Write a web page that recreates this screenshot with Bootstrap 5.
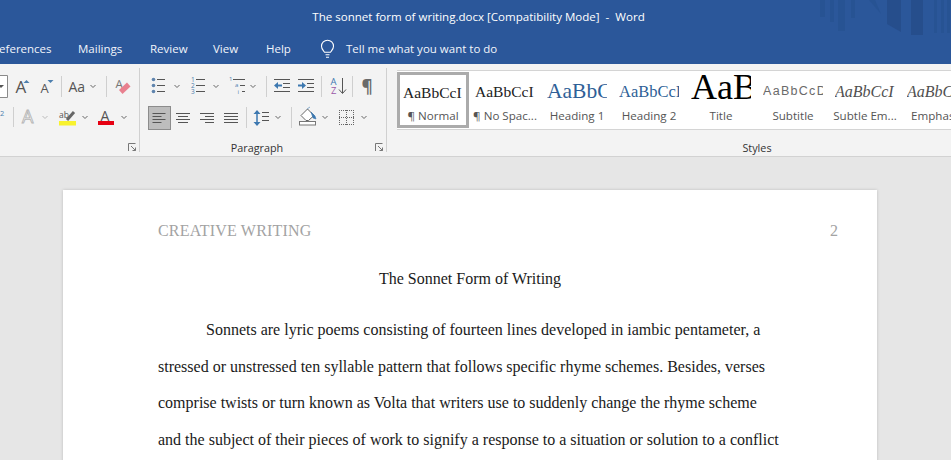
<!DOCTYPE html>
<html lang="en"><head><meta charset="utf-8"><title>Word</title>
<link href="https://cdn.jsdelivr.net/npm/bootstrap@5.3.0/dist/css/bootstrap.min.css" rel="stylesheet">
<style>
html,body{height:460px;overflow:hidden;background:#e6e6e6}
body{font-family:"Open Sans","Noto Sans",sans-serif;color:#444}
.ttl{height:33px;background:#2b579a;color:#fff;font-size:11.55px;position:relative;padding-left:6px}
.stripes{position:absolute;left:820px;top:0}
.tabs{height:31px;background:#2b579a;color:#f2f5fa;font-size:11.5px;white-space:nowrap;overflow:hidden}
.tb{display:block}
.t-ref{margin-left:-8px;width:86px}.t-mail{width:72px}.t-rev{width:63px}.t-view{width:53px}.t-help{width:54px}.t-bulb{width:26px;height:19px}
.rb{height:93px;background:#f3f3f3;border-bottom:1px solid #d2d2d2}
.g1{width:140px}.g2{width:247px}.g1,.g2{border-right:1px solid #d0d0d0;margin-top:4px;height:84px;padding-top:5px}
.g3{min-width:0}
.trow{height:28px;display:flex;margin-bottom:2px}
.trow svg{display:block;flex:none}
.gf{height:16px;margin-top:7px;font-size:10.8px;color:#333;line-height:16px}
.g3 .gf{margin-top:10px;padding-left:176px}
.selb{width:23px;height:24px;margin:3px 2px 0 8px;background:#bdbdbd;border:1px solid #8c8c8c;flex:none}
.gal{margin:6px 0 0 10px;height:60px;background:#fff;border-top:1px solid #d4d4d4;border-bottom:1px solid #d4d4d4;overflow:hidden;white-space:nowrap}
.sty{width:72px;flex:none;height:58px;text-align:center;overflow:hidden}
.sty.on{outline:3px solid #ababab;outline-offset:-3px;margin-top:1px;height:56px}
.pv{height:37px;margin:0 6px;overflow:hidden;text-align:left;line-height:41px;font-family:"Liberation Serif",serif;font-size:15.5px;color:#222}
.sty.on .pv{height:36px}
.lb{font-size:11.6px;color:#555;line-height:16px}
.pv-h1{font-size:21.500px;color:#2f5f97}.pv-h2{font-size:16.500px;color:#2f5f97}
.pv-t{font-size:36px;color:#000;line-height:33px}
.pv-s{font-family:"Liberation Sans",sans-serif;font-size:12.500px;letter-spacing:1.300px;color:#6a6a6a}
.pv-i{font-style:italic;color:#505050;font-size:16px}
.doc{padding:33px 0 0 63px;height:303px;overflow:hidden}
.pg{width:814px;height:400px;background:#fff;box-shadow:0 0 3px rgba(0,0,0,.18);padding:27px 95px 0 95px;font-family:"Liberation Serif",serif;font-size:16px;color:#1a1a1a;white-space:nowrap}
.hd{color:#a3a3a3;line-height:28px;margin-right:-56px}
.hd-t{letter-spacing:.2px}
.tt{text-align:center;margin-top:20px;line-height:28px}
.ln{line-height:36.6px;height:36.6px}
.fi{padding-left:48px}
.bd{margin-top:19px}
text{font-family:"Open Sans",sans-serif}
</style></head><body>
<div class="ttl d-flex align-items-center justify-content-center">
<span>The sonnet form of writing.docx [Compatibility Mode]&nbsp; -&nbsp; Word</span>
<svg class="stripes" width="131" height="40" viewBox="820 0 131 40" aria-hidden="true"><g fill="#24508f" opacity=".55"><rect x="820" width="5" height="17"/><rect x="830" width="4" height="22"/><rect x="838" width="7" height="31"/><rect x="851" width="4" height="18"/><path d="M869 0h6l6 14v0z"/><rect x="934" width="3" height="33"/><rect x="941" width="3" height="33"/><rect x="947" width="3" height="33"/></g><g fill="#254b88" opacity=".75"><path d="M887 0h14v32l-14-8z"/><rect x="911" width="12" height="35"/></g></svg>
</div>
<div class="tabs d-flex align-items-center">
<span class="tb t-ref">References</span><span class="tb t-mail">Mailings</span><span class="tb t-rev">Review</span><span class="tb t-view">View</span><span class="tb t-help">Help</span>
<svg class="t-bulb" viewBox="0 0 26 19" aria-hidden="true"><path d="M4 13c-1-1.500-3-3-3-6a6 6 0 0 1 12 0c0 3-2 4.500-3 6zM5 15.500h4M5.500 18h3" transform="translate(.5 .2)" fill="none" stroke="#fff" stroke-width="1.100"/></svg>
<span class="tb">Tell me what you want to do</span>
</div>
<div class="rb d-flex">
<section class="g1 flex-none d-flex flex-column">
<div class="trow">
<svg width="11" height="28" viewBox="0 73 11 28"><path d="M-2 75.500h9.500v22H-2" fill="#fff" stroke="#8a8a8a"/><path d="M-2 85l3 3 3-3" fill="#555"/></svg>
<svg width="23" height="28" viewBox="11 73 23 28"><text x="15.500" y="93" font-size="17" fill="#555">A</text><path d="M23.500 83l3-3 3 3z" fill="#4d7fae"/></svg>
<svg width="25" height="28" viewBox="34 73 25 28"><text x="40.500" y="93" font-size="13" fill="#555">A</text><path d="M47.500 80h6l-3 3z" fill="#4d7fae"/></svg>
<svg width="4" height="28" viewBox="58 73 4 28"><path d="M60.500 76v21" stroke="#cfcfcf"/></svg>
<svg width="38" height="28" viewBox="62 73 38 28"><text x="67.500" y="91.500" font-size="14" fill="#555">Aa</text><path d="M89.500 85l2.500 2.500 2.500-2.500" fill="none" stroke="#666"/></svg>
<svg width="10" height="28" viewBox="100 73 10 28"><path d="M105.500 76v21" stroke="#cfcfcf"/></svg>
<svg width="29" height="28" viewBox="110 73 29 28"><text x="114.500" y="88" font-size="11.500" fill="#777">A</text><path d="M118 90l8-7.500 3.500 4-8 7.500z" fill="#e8808f"/></svg>
</div>
<div class="trow">
<svg width="11" height="28" viewBox="0 103 11 28"><text x="0" y="116" font-size="7.500" fill="#4d7fae">2</text></svg>
<svg width="5" height="28" viewBox="11 103 5 28"><path d="M13.500 107v20" stroke="#cfcfcf"/></svg>
<svg width="37" height="28" viewBox="16 103 37 28"><text x="22" y="123" font-size="18" fill="#fff" stroke="#b5b5b5" stroke-width=".9">A</text><path d="M42.500 116l2.500 2.500 2.500-2.500" fill="none" stroke="#bbb"/></svg>
<svg width="38" height="28" viewBox="53 103 38 28"><text x="59" y="118" font-size="8.500" fill="#555">ab</text><path d="M67 120l7-8" stroke="#666" stroke-width="3"/><rect x="59" y="121" width="17" height="4.500" fill="#f8f22e"/><path d="M82.500 116l2.500 2.500 2.500-2.500" fill="none" stroke="#666"/></svg>
<svg width="48" height="28" viewBox="91 103 48 28"><text x="100.500" y="120.500" font-size="14" fill="#555">A</text><rect x="98" y="121" width="16" height="4" fill="#e60012"/><path d="M121.500 116l2.500 2.500 2.500-2.500" fill="none" stroke="#666"/></svg>
</div>
<div class="gf d-flex justify-content-end">
<svg width="12" height="16" viewBox="127 141 12 16"><path d="M128.500 152v-7.500h7M131 147l4.500 4.500M135.500 148.500v3h-3" fill="none" stroke="#777"/></svg>
</div>
</section>
<section class="g2 flex-none d-flex flex-column">
<div class="trow">
<svg width="45" height="28" viewBox="140 73 45 28"><g fill="#5f84ad"><circle cx="153.500" cy="79.500" r="1.800"/><circle cx="153.500" cy="85.500" r="1.800"/><circle cx="153.500" cy="91.500" r="1.800"/></g><path d="M157 79.500h8M157 85.500h8M157 91.500h8" stroke="#555"/><path d="M174.500 85l2.500 2.500 2.500-2.500" fill="none" stroke="#666"/></svg>
<svg width="37" height="28" viewBox="185 73 37 28"><g font-size="6.500" fill="#4d7fae"><text x="191" y="81.500">1</text><text x="191" y="87.500">2</text><text x="191" y="93.500">3</text></g><path d="M196 79.500h9M196 85.500h9M196 91.500h9" stroke="#555"/><path d="M213.500 85l2.500 2.500 2.500-2.500" fill="none" stroke="#666"/></svg>
<svg width="40" height="28" viewBox="222 73 40 28"><g font-size="6" fill="#4d7fae"><text x="229" y="81">1</text><text x="235" y="87">a</text><text x="237.500" y="93.500">i</text></g><path d="M233 79.500h12M240 85.500h5M242 91.500h3" stroke="#555"/><path d="M250.500 85l2.500 2.500 2.500-2.500" fill="none" stroke="#666"/></svg>
<svg width="8" height="28" viewBox="262 73 8 28"><path d="M266.500 76v21" stroke="#cfcfcf"/></svg>
<svg width="24" height="28" viewBox="270 73 24 28"><path d="M274 79.500h16M283 83.500h7M283 87.500h7M274 91.500h16" stroke="#555"/><path d="M282 85.500h-5" stroke="#3d78b0" stroke-width="2"/><path d="M274 85.500l4-3.500v7z" fill="#3d78b0"/></svg>
<svg width="24" height="28" viewBox="294 73 24 28"><path d="M298 79.500h16M307 83.500h7M307 87.500h7M298 91.500h16" stroke="#555"/><path d="M298 85.500h5" stroke="#3d78b0" stroke-width="2"/><path d="M306 85.500l-4-3.500v7z" fill="#3d78b0"/></svg>
<svg width="7" height="28" viewBox="318 73 7 28"><path d="M321.500 76v21" stroke="#cfcfcf"/></svg>
<svg width="24" height="28" viewBox="325 73 24 28"><text x="330.500" y="85" font-size="9.500" fill="#3d78b0">A</text><text x="331" y="94" font-size="9.500" fill="#9a57a8">Z</text><path d="M342.500 78v15M339 89.500l3.500 4 3.500-4" fill="none" stroke="#555"/></svg>
<svg width="7" height="28" viewBox="349 73 7 28"><path d="M352.500 76v21" stroke="#cfcfcf"/></svg>
<svg width="30" height="28" viewBox="356 73 30 28"><text x="361.500" y="93" font-size="17" font-weight="700" fill="#6a6a6a">¶</text></svg>
</div>
<div class="trow">
<span class="selb"><svg width="21" height="22" viewBox="149 107 21 22"><path d="M152.500 113.500h13M152.500 116.500h9M152.500 119.500h13M152.500 122.500h9" stroke="#555"/></svg></span>
<svg width="25" height="28" viewBox="173 103 25 28"><path d="M176 113.500h14M178 116.500h10M176 119.500h14M178 122.500h10" stroke="#555"/></svg>
<svg width="24" height="28" viewBox="198 103 24 28"><path d="M200 113.500h14M205 116.500h9M200 119.500h14M205 122.500h9" stroke="#555"/></svg>
<svg width="22" height="28" viewBox="222 103 22 28"><path d="M224 113.500h14M224 116.500h14M224 119.500h14M224 122.500h14" stroke="#555"/></svg>
<svg width="6" height="28" viewBox="244 103 6 28"><path d="M246.500 107v21" stroke="#cfcfcf"/></svg>
<svg width="38" height="28" viewBox="250 103 38 28"><path d="M257 111v14" stroke="#3d78b0" stroke-width="1.500"/><path d="M253.500 114l3.500-4 3.500 4zM253.500 122l3.500 4 3.500-4z" fill="#3d78b0"/><path d="M262 112.500h7M262 116.500h7M262 120.500h7" stroke="#555"/><path d="M275.500 116l2.500 2.500 2.500-2.500" fill="none" stroke="#666"/></svg>
<svg width="7" height="28" viewBox="288 103 7 28"><path d="M291.500 107v21" stroke="#cfcfcf"/></svg>
<svg width="37" height="28" viewBox="295 103 37 28"><path d="M301 115.500l6.500-6.500 6.500 6.500-5.500 5h-2.500z" fill="#fff" stroke="#666"/><path d="M307 109l3-2M311 112l4 4 1 3-3-1z" fill="#3d78b0" stroke="#3d78b0" stroke-width=".6"/><rect x="299.500" y="121.500" width="16" height="3.500" fill="#fff" stroke="#777"/><path d="M322.500 116l2.500 2.500 2.500-2.500" fill="none" stroke="#666"/></svg>
<svg width="54" height="28" viewBox="332 103 54 28" shape-rendering="crispEdges"><path d="M339.500 110v15M346.500 110v15M353.500 110v15M339 110.500h15M339 117.500h15M339 124.500h15" fill="none" stroke="#666" stroke-dasharray="1 1"/><path shape-rendering="auto" d="M361.500 116l2.500 2.500 2.500-2.500" fill="none" stroke="#666"/></svg>
</div>
<div class="gf d-flex">
<span class="flex-fill"></span><span>Paragraph</span>
<span class="flex-fill d-flex justify-content-end"><svg width="12" height="16" viewBox="374 141 12 16"><path d="M375.500 152v-7.500h7M378 147l4.500 4.500M382.500 148.500v3h-3" fill="none" stroke="#777"/></svg></span>
</div>
</section>
<section class="g3 flex-fill d-flex flex-column">
<div class="gal d-flex">
<div class="sty on"><div class="pv">AaBbCcI</div><div class="lb">¶ Normal</div></div>
<div class="sty"><div class="pv">AaBbCcI</div><div class="lb">¶ No Spac...</div></div>
<div class="sty"><div class="pv pv-h1">AaBbC</div><div class="lb">Heading 1</div></div>
<div class="sty"><div class="pv pv-h2">AaBbCcI</div><div class="lb">Heading 2</div></div>
<div class="sty"><div class="pv pv-t">AaB</div><div class="lb">Title</div></div>
<div class="sty"><div class="pv pv-s">AaBbCcD</div><div class="lb">Subtitle</div></div>
<div class="sty"><div class="pv pv-i">AaBbCcI</div><div class="lb">Subtle Em...</div></div>
<div class="sty"><div class="pv pv-i">AaBbCcI</div><div class="lb">Emphasis</div></div>
</div>
<div class="gf text-center">Styles</div>
</section>
</div>
<div class="doc"><article class="pg">
<div class="hd d-flex justify-content-between"><span class="hd-t">CREATIVE WRITING</span><span>2</span></div>
<div class="tt">The Sonnet Form of Writing</div>
<div class="bd">
<div class="ln fi">Sonnets are lyric poems consisting of fourteen lines developed in iambic pentameter, a</div>
<div class="ln">stressed or unstressed ten syllable pattern that follows specific rhyme schemes. Besides, verses</div>
<div class="ln">comprise twists or turn known as Volta that writers use to suddenly change the rhyme scheme</div>
<div class="ln">and the subject of their pieces of work to signify a response to a situation or solution to a conflict</div>
</div>
</article></div>
</body></html>
